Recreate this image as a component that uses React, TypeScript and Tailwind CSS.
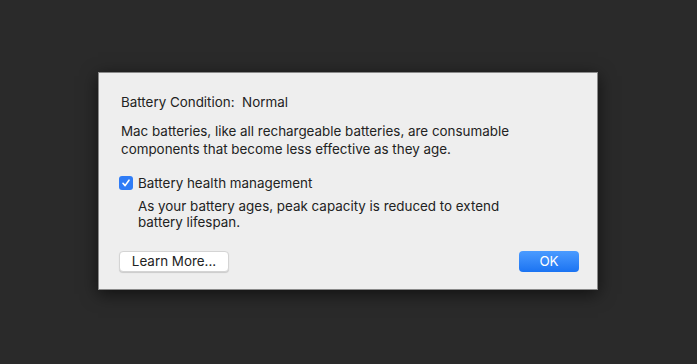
import React from 'react'

export default function App() {
  return (
    <div
      className="w-[697px] h-[364px] bg-[#2a2a2a] pt-[72px] pl-[98px]"
      style={{ fontFamily: 'Inter, "Liberation Sans", sans-serif' }}
    >
      <div className="w-[500px] h-[218px] bg-[#eeeeee] border border-[#8a8a8a] shadow-[0_4px_16px_rgba(0,0,0,0.6)] pl-[22px] pr-[18px] pt-[20px] text-[13.4px] text-[#222222]">
        <p className="leading-[18px]">Battery Condition:&nbsp;&nbsp;Normal</p>
        <p className="mt-[11px] leading-[18px] w-[410px]">
          Mac batteries, like all rechargeable batteries, are consumable components that become less effective as they age.
        </p>

        <div className="mt-[16px] flex items-center gap-[5px] -ml-[2px]">
          <span className="w-[14px] h-[14px] rounded-[3px] bg-[#2f7cf6] flex items-center justify-center">
            <svg width="10" height="10" viewBox="0 0 10 10" fill="none">
              <path d="M2 5.3 L4.1 7.6 L8 2.2" stroke="white" strokeWidth="1.6" strokeLinecap="round" strokeLinejoin="round" />
            </svg>
          </span>
          <span className="leading-[18px]">Battery health management</span>
        </div>
        <p className="mt-[6px] ml-[17px] leading-[16px] w-[390px]">
          As your battery ages, peak capacity is reduced to extend battery lifespan.
        </p>

        <div className="mt-[21px] flex justify-between -ml-[2px]">
          <button className="w-[110px] h-[21px] bg-white rounded-[4px] border border-[#d4d4d4] shadow-[0_1px_1px_rgba(0,0,0,0.15)] text-[13.4px] leading-none text-[#222222]">
            Learn More...
          </button>
          <button className="w-[60px] h-[21px] rounded-[4px] bg-gradient-to-b from-[#4a9bff] to-[#1a73f2] text-white text-[13.4px] leading-none">
            OK
          </button>
        </div>
      </div>
    </div>
  )
}
